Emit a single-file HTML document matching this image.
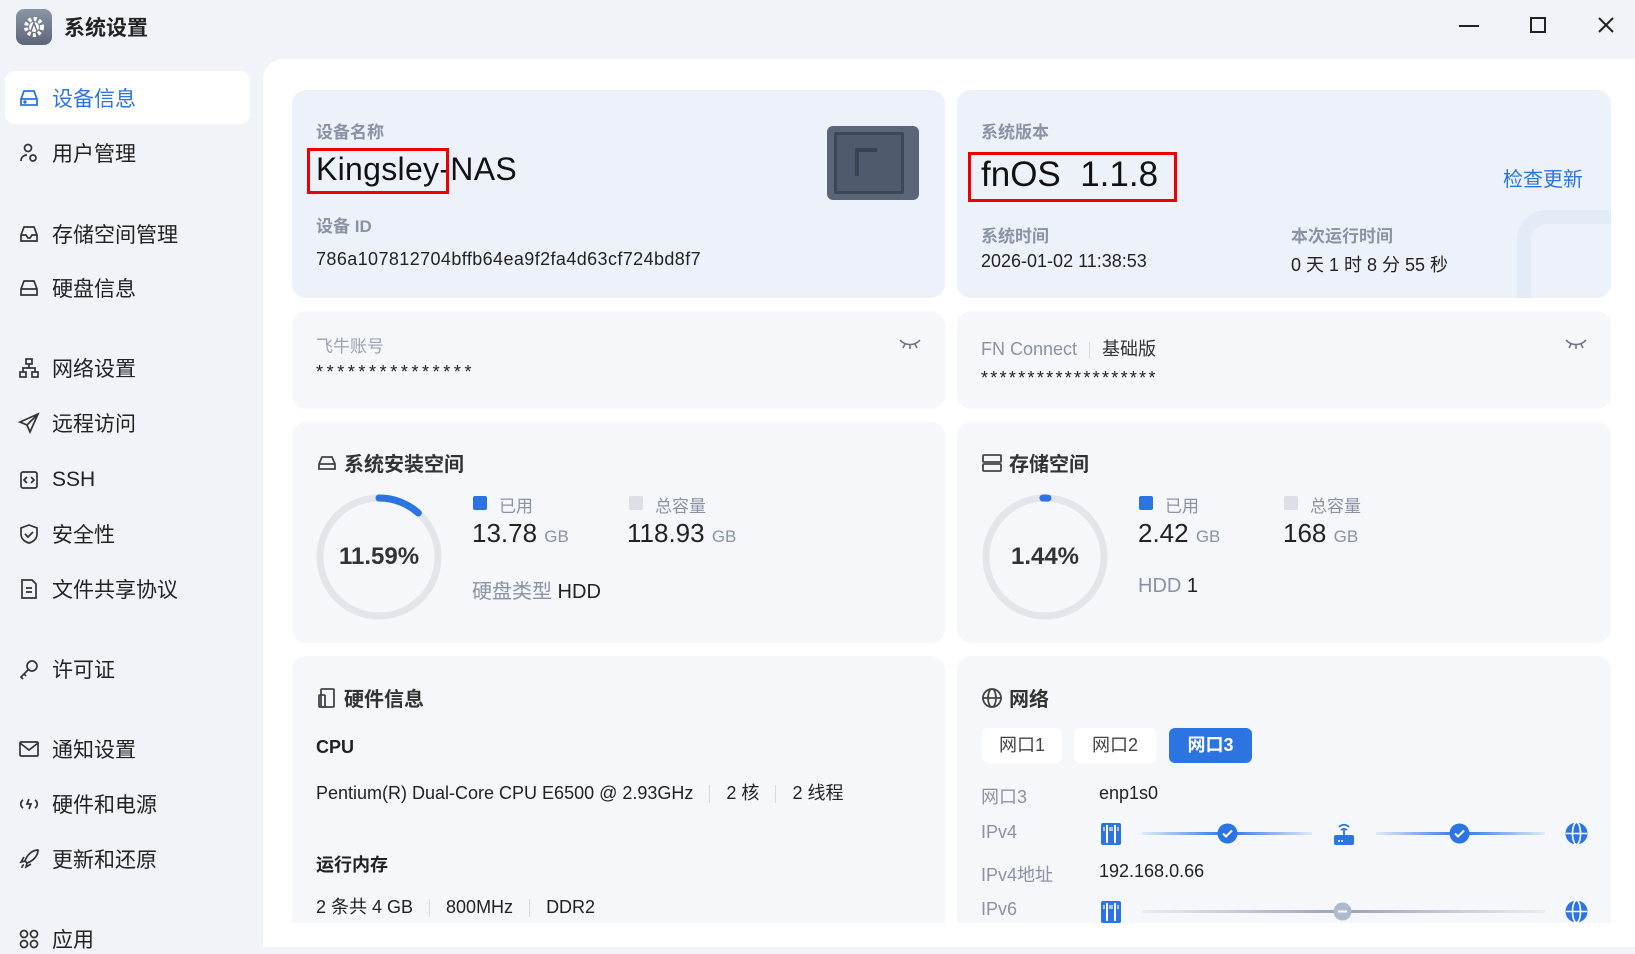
<!DOCTYPE html>
<html><head><meta charset="utf-8"><style>
*{margin:0;padding:0;box-sizing:border-box}
body{width:1635px;height:947px;background:#f0f3f8;font-family:"Liberation Sans","Noto Sans CJK SC",sans-serif;position:relative;overflow:hidden;color:#222}
.a{position:absolute;white-space:nowrap}
.nav{position:absolute;left:18px;font-size:21px;color:#222;display:flex;align-items:center;gap:12px;height:30px}
.nav svg{width:22px;height:22px}
.card{position:absolute;background:#f5f7fb;border-radius:14px}
.lbl{color:#8a93a6;font-weight:bold;font-size:17px}
.g{color:#8a93a6}
.t{font-size:20px;font-weight:bold;color:#333;display:flex;align-items:center;gap:6px}
.sep{display:inline-block;width:1px;height:18px;background:#d5d9e2;margin:0 16px;vertical-align:middle}
</style></head><body>
<!-- title bar -->
<div class="a" style="left:16px;top:9px;width:36px;height:36px;border-radius:8px;background:linear-gradient(#8a95a8,#5d6678)"></div>
<svg class="a" style="left:20px;top:13px" width="28" height="28" viewBox="0 0 28 28"><circle cx="14" cy="14" r="8" fill="none" stroke="#fff" stroke-width="4" stroke-dasharray="3 2.3"/><circle cx="14" cy="14" r="5" fill="#fff"/><path d="M11 18l3-8 3 8" stroke="#6b7486" stroke-width="1.5" fill="none"/></svg>
<div class="a" style="left:64px;top:12px;font-size:21px;font-weight:bold">系统设置</div>
<div class="a" style="left:1459px;top:25px;width:20px;height:2px;background:#222"></div>
<div class="a" style="left:1530px;top:17px;width:16px;height:16px;border:2px solid #222"></div>
<svg class="a" style="left:1597px;top:16px" width="18" height="18"><path d="M2 2L16 16M16 2L2 16" stroke="#222" stroke-width="2"/></svg>

<!-- sidebar -->
<div class="a" style="left:5px;top:71px;width:245px;height:53px;background:#fff;border-radius:10px"></div>
<div class="nav" style="top:83px;color:#2b74e2"><svg viewBox="0 0 22 22" fill="none" stroke="#2b74e2" stroke-width="1.8"><path d="M3 12l3-8h10l3 8v6H3z M3 12h16"/><circle cx="7" cy="15" r=".8"/></svg>设备信息</div>
<div class="nav" style="top:138px"><svg viewBox="0 0 22 22" fill="none" stroke="#333" stroke-width="1.7"><circle cx="10" cy="6" r="3.5"/><path d="M3 19c0-4 3-6 6-6"/><circle cx="15" cy="16" r="3"/></svg>用户管理</div>
<div class="nav" style="top:219px"><svg viewBox="0 0 22 22" fill="none" stroke="#333" stroke-width="1.7"><path d="M3 12l3-8h10l3 8v6H3z M3 12h5l2 3h2l2-3h5"/></svg>存储空间管理</div>
<div class="nav" style="top:273px"><svg viewBox="0 0 22 22" fill="none" stroke="#333" stroke-width="1.7"><path d="M3 12l3-8h10l3 8v6H3z M3 12h16"/></svg>硬盘信息</div>
<div class="nav" style="top:353px"><svg viewBox="0 0 22 22" fill="none" stroke="#333" stroke-width="1.7"><rect x="8" y="2" width="6" height="5"/><rect x="2" y="15" width="6" height="5"/><rect x="14" y="15" width="6" height="5"/><path d="M11 7v4M5 15v-4h12v4"/></svg>网络设置</div>
<div class="nav" style="top:408px"><svg viewBox="0 0 22 22" fill="none" stroke="#333" stroke-width="1.7"><path d="M20 2L2 10l7 3 3 7z M9 13l11-11"/></svg>远程访问</div>
<div class="nav" style="top:465px"><svg viewBox="0 0 22 22" fill="none" stroke="#333" stroke-width="1.7"><rect x="3" y="3" width="16" height="16" rx="2"/><path d="M9 8l-3 3 3 3M13 8l3 3-3 3"/></svg>SSH</div>
<div class="nav" style="top:519px"><svg viewBox="0 0 22 22" fill="none" stroke="#333" stroke-width="1.7"><path d="M11 2l8 3v6c0 5-4 8-8 9-4-1-8-4-8-9V5z M7 11l3 3 5-5"/></svg>安全性</div>
<div class="nav" style="top:574px"><svg viewBox="0 0 22 22" fill="none" stroke="#333" stroke-width="1.7"><path d="M4 2h10l4 4v14H4z M8 10h6M8 14h6"/></svg>文件共享协议</div>
<div class="nav" style="top:654px"><svg viewBox="0 0 22 22" fill="none" stroke="#333" stroke-width="1.7"><circle cx="14" cy="8" r="5"/><path d="M10 12l-7 7 2 2M6 16l2 2"/></svg>许可证</div>
<div class="nav" style="top:734px"><svg viewBox="0 0 22 22" fill="none" stroke="#333" stroke-width="1.7"><rect x="2" y="4" width="18" height="14" rx="1"/><path d="M2 5l9 7 9-7"/></svg>通知设置</div>
<div class="nav" style="top:789px"><svg viewBox="0 0 22 22" fill="none" stroke="#333" stroke-width="1.7"><path d="M5 7c-3 2-3 6 0 8M17 7c3 2 3 6 0 8M11 6l-2 5h4l-2 5"/></svg>硬件和电源</div>
<div class="nav" style="top:844px"><svg viewBox="0 0 22 22" fill="none" stroke="#333" stroke-width="1.7"><path d="M20 2c-6 0-11 5-13 11l2 2c6-2 11-7 11-13z M7 13l-4 1 3-5 M9 15l-1 4 5-3 M4 20c0-2 1-3 2-3"/></svg>更新和还原</div>
<div class="nav" style="top:924px"><svg viewBox="0 0 22 22" fill="none" stroke="#333" stroke-width="1.7"><circle cx="6" cy="6" r="3.5"/><circle cx="16" cy="6" r="3.5"/><circle cx="6" cy="16" r="3.5"/><circle cx="16" cy="16" r="3.5"/></svg>应用</div>

<!-- main -->
<div class="a" style="left:263px;top:59px;width:1372px;height:888px;background:#fff;border-radius:20px 0 0 0"></div>
<div class="a" style="left:263px;top:946px;width:1372px;height:1px;background:#eceff4"></div>

<!-- row1 -->
<div class="card" style="left:292px;top:90px;width:653px;height:208px;background:#edf2fa"></div>
<div class="a lbl" style="left:316px;top:118px">设备名称</div>
<div class="a" style="left:316px;top:151px;font-size:32px;color:#111;letter-spacing:0.3px">Kingsley-NAS</div>
<div class="a" style="left:307px;top:148px;width:142px;height:46px;border:3px solid #ee0000"></div>
<div class="a lbl" style="left:316px;top:212px">设备 ID</div>
<div class="a" style="left:316px;top:249px;font-size:18px;color:#222;letter-spacing:0.4px">786a107812704bffb64ea9f2fa4d63cf724bd8f7</div>
<div class="a" style="left:827px;top:126px;width:92px;height:74px;background:#5a6577;border-radius:6px"></div>
<div class="a" style="left:834px;top:132px;width:70px;height:62px;border:3px solid #3e4756;background:#4f5a6c;border-radius:2px"></div>
<div class="a" style="left:855px;top:148px;width:22px;height:28px;border-left:4px solid #3a4352;border-top:4px solid #3a4352"></div>

<div class="card" style="left:957px;top:90px;width:654px;height:208px;background:#edf2fa;overflow:hidden"><div style="position:absolute;left:560px;top:120px;width:140px;height:140px;border:14px solid #e3ebf6;border-radius:30px"></div></div>
<div class="a lbl" style="left:981px;top:118px">系统版本</div>
<div class="a" style="left:981px;top:155px;font-size:35px;color:#111">fnOS&nbsp;&nbsp;1.1.8</div>
<div class="a" style="left:968px;top:152px;width:209px;height:50px;border:3px solid #ee0000"></div>
<div class="a" style="left:1503px;top:163px;font-size:20px;color:#2b74e2">检查更新</div>
<div class="a lbl" style="left:981px;top:222px">系统时间</div>
<div class="a" style="left:981px;top:251px;font-size:18px">2026-01-02 11:38:53</div>
<div class="a lbl" style="left:1291px;top:222px">本次运行时间</div>
<div class="a" style="left:1291px;top:251px;font-size:18px">0 天 1 时 8 分 55 秒</div>

<!-- row2 -->
<div class="card" style="left:292px;top:311px;width:653px;height:98px"></div>
<div class="a g" style="left:316px;top:332px;font-size:17px;color:#9aa3b4">飞牛账号</div>
<div class="a" style="left:316px;top:362px;font-size:18px;letter-spacing:3.6px">***************</div>
<svg class="a" style="left:898px;top:337px" width="24" height="14" viewBox="0 0 24 14" fill="none" stroke="#6b7486" stroke-width="1.6"><path d="M2 3c5 6 15 6 20 0M7 7l-2 4M12 8v4M17 7l2 4"/></svg>
<div class="card" style="left:957px;top:311px;width:654px;height:98px"></div>
<div class="a g" style="left:981px;top:335px;font-size:18px">FN Connect<span class="sep" style="margin:0 12px;height:16px"></span><span style="color:#333">基础版</span></div>
<div class="a" style="left:981px;top:368px;font-size:18px;letter-spacing:2.3px">*******************</div>
<svg class="a" style="left:1564px;top:337px" width="24" height="14" viewBox="0 0 24 14" fill="none" stroke="#6b7486" stroke-width="1.6"><path d="M2 3c5 6 15 6 20 0M7 7l-2 4M12 8v4M17 7l2 4"/></svg>

<!-- row3 -->
<div class="card" style="left:292px;top:422px;width:653px;height:221px"></div>
<div class="a t" style="left:316px;top:448px"><svg width="22" height="22" viewBox="0 0 22 22" fill="none" stroke="#444" stroke-width="1.8"><path d="M3 12l3-7h10l3 7v5H3z M3 12h16"/></svg>系统安装空间</div>
<svg class="a" style="left:316px;top:494px" width="126" height="126"><circle cx="63" cy="63" r="59" fill="none" stroke="#e3e5ea" stroke-width="7"/><circle cx="63" cy="63" r="59" fill="none" stroke="#2b74e2" stroke-width="7" stroke-dasharray="43 400" transform="rotate(-90 63 63)" stroke-linecap="round"/></svg>
<div class="a" style="left:316px;top:543px;width:126px;text-align:center;font-size:24px;font-weight:bold;color:#333">11.59%</div>
<div class="a" style="left:473px;top:496px;width:14px;height:14px;background:#2b74e2;border-radius:2px"></div>
<div class="a g" style="left:499px;top:492px;font-size:17px">已用</div>
<div class="a" style="left:472px;top:518px;font-size:26px;color:#222">13.78 <span class="g" style="font-size:17px">GB</span></div>
<div class="a" style="left:629px;top:496px;width:14px;height:14px;background:#dcdfe5;border-radius:2px"></div>
<div class="a g" style="left:655px;top:492px;font-size:17px">总容量</div>
<div class="a" style="left:627px;top:518px;font-size:26px;color:#222">118.93 <span class="g" style="font-size:17px">GB</span></div>
<div class="a" style="left:472px;top:575px;font-size:20px"><span class="g">硬盘类型</span> HDD</div>

<div class="card" style="left:957px;top:422px;width:654px;height:221px"></div>
<div class="a t" style="left:981px;top:448px"><svg width="22" height="22" viewBox="0 0 22 22" fill="none" stroke="#444" stroke-width="1.8"><rect x="2" y="3" width="18" height="7" rx="1"/><rect x="2" y="12" width="18" height="7" rx="1"/></svg>存储空间</div>
<svg class="a" style="left:982px;top:494px" width="126" height="126"><circle cx="63" cy="63" r="59" fill="none" stroke="#e3e5ea" stroke-width="7"/><circle cx="63" cy="63" r="59" fill="none" stroke="#2b74e2" stroke-width="7" stroke-dasharray="5 400" transform="rotate(-92 63 63)" stroke-linecap="round"/></svg>
<div class="a" style="left:982px;top:543px;width:126px;text-align:center;font-size:24px;font-weight:bold;color:#333">1.44%</div>
<div class="a" style="left:1139px;top:496px;width:14px;height:14px;background:#2b74e2;border-radius:2px"></div>
<div class="a g" style="left:1165px;top:492px;font-size:17px">已用</div>
<div class="a" style="left:1138px;top:518px;font-size:26px;color:#222">2.42 <span class="g" style="font-size:17px">GB</span></div>
<div class="a" style="left:1284px;top:496px;width:14px;height:14px;background:#dcdfe5;border-radius:2px"></div>
<div class="a g" style="left:1310px;top:492px;font-size:17px">总容量</div>
<div class="a" style="left:1283px;top:518px;font-size:26px;color:#222">168 <span class="g" style="font-size:17px">GB</span></div>
<div class="a" style="left:1138px;top:575px;font-size:20px"><span class="g">HDD</span> 1</div>

<!-- row4 -->
<div class="card" style="left:292px;top:656px;width:653px;height:267px;border-radius:14px 14px 0 0"></div>
<div class="a t" style="left:316px;top:683px"><svg width="22" height="22" viewBox="0 0 22 22" fill="none" stroke="#444" stroke-width="1.8"><rect x="5" y="2" width="13" height="18" rx="1"/><rect x="3" y="8" width="6" height="12" rx="1"/></svg>硬件信息</div>
<div class="a" style="left:316px;top:737px;font-size:18px;font-weight:bold">CPU</div>
<div class="a" style="left:316px;top:779px;font-size:18px">Pentium(R) Dual-Core CPU E6500 @ 2.93GHz<span class="sep"></span>2 核<span class="sep"></span>2 线程</div>
<div class="a" style="left:316px;top:851px;font-size:18px;font-weight:bold">运行内存</div>
<div class="a" style="left:316px;top:893px;font-size:18px">2 条共 4 GB<span class="sep"></span>800MHz<span class="sep"></span>DDR2</div>

<div class="card" style="left:957px;top:656px;width:654px;height:267px;border-radius:14px 14px 0 0"></div>
<div class="a t" style="left:981px;top:683px"><svg width="22" height="22" viewBox="0 0 22 22" fill="none" stroke="#444" stroke-width="1.8"><circle cx="11" cy="11" r="9"/><ellipse cx="11" cy="11" rx="4" ry="9"/><path d="M2 11h18"/></svg>网络</div>
<div class="a" style="left:982px;top:728px;width:80px;height:35px;background:#fff;border-radius:6px;font-size:18px;color:#444;text-align:center;line-height:35px">网口1</div>
<div class="a" style="left:1074px;top:728px;width:82px;height:35px;background:#fff;border-radius:6px;font-size:18px;color:#444;text-align:center;line-height:35px">网口2</div>
<div class="a" style="left:1169px;top:728px;width:83px;height:35px;background:#2b74e2;border-radius:6px;font-size:18px;color:#fff;font-weight:bold;text-align:center;line-height:35px">网口3</div>
<div class="a g" style="left:981px;top:783px;font-size:18px">网口3</div><div class="a" style="left:1099px;top:783px;font-size:18px">enp1s0</div>
<div class="a g" style="left:981px;top:822px;font-size:18px">IPv4</div>
<div class="a g" style="left:981px;top:861px;font-size:18px">IPv4地址</div><div class="a" style="left:1099px;top:861px;font-size:18px">192.168.0.66</div>
<div class="a g" style="left:981px;top:899px;font-size:18px">IPv6</div>
<div class="a" style="left:1142px;top:832px;width:170px;height:3px;background:linear-gradient(90deg,rgba(43,116,226,.1),#2b74e2 50%,rgba(43,116,226,.1))"></div>
<div class="a" style="left:1376px;top:832px;width:169px;height:3px;background:linear-gradient(90deg,rgba(43,116,226,.1),#2b74e2 50%,rgba(43,116,226,.1))"></div>
<svg class="a" style="left:1217px;top:823px" width="21" height="21"><circle cx="10.5" cy="10.5" r="10" fill="#2b74e2"/><path d="M6 10.5l3 3 6-6" stroke="#fff" stroke-width="2" fill="none"/></svg>
<svg class="a" style="left:1449px;top:823px" width="21" height="21"><circle cx="10.5" cy="10.5" r="10" fill="#2b74e2"/><path d="M6 10.5l3 3 6-6" stroke="#fff" stroke-width="2" fill="none"/></svg>
<svg class="a" style="left:1100px;top:822px" width="22" height="24"><rect x="1" y="1" width="20" height="22" rx="2" fill="#2b74e2"/><path d="M7 3v18M15 3v18" stroke="#fff" stroke-width="2"/><path d="M4 5v4M10 5v4M12 5v4M18 5v4" stroke="#fff" stroke-width="1.2"/></svg>
<svg class="a" style="left:1333px;top:822px" width="22" height="24"><rect x="1" y="13" width="20" height="10" rx="2" fill="#2b74e2"/><path d="M11 13V7M6 5c3-3 7-3 10 0M8 8c2-1.5 4-1.5 6 0" stroke="#2b74e2" stroke-width="1.8" fill="none"/><circle cx="6" cy="19" r="1" fill="#fff"/><circle cx="9" cy="19" r="1" fill="#fff"/></svg>
<svg class="a" style="left:1565px;top:822px" width="23" height="23"><circle cx="11.5" cy="11.5" r="11" fill="#2b74e2"/><ellipse cx="11.5" cy="11.5" rx="4" ry="11" fill="none" stroke="#fff" stroke-width="1.6"/><path d="M1 11.5h21" stroke="#fff" stroke-width="1.6"/></svg>
<div class="a" style="left:1142px;top:910px;width:403px;height:3px;background:linear-gradient(90deg,rgba(140,150,170,.1),#98a3b8 50%,rgba(140,150,170,.1))"></div>
<svg class="a" style="left:1333px;top:902px" width="19" height="19"><circle cx="9.5" cy="9.5" r="9" fill="#aebbcc"/><path d="M5 9.5h9" stroke="#fff" stroke-width="2"/></svg>
<svg class="a" style="left:1100px;top:900px" width="22" height="24"><rect x="1" y="1" width="20" height="22" rx="2" fill="#2b74e2"/><path d="M7 3v18M15 3v18" stroke="#fff" stroke-width="2"/><path d="M4 5v4M10 5v4M12 5v4M18 5v4" stroke="#fff" stroke-width="1.2"/></svg>
<svg class="a" style="left:1565px;top:900px" width="23" height="23"><circle cx="11.5" cy="11.5" r="11" fill="#2b74e2"/><ellipse cx="11.5" cy="11.5" rx="4" ry="11" fill="none" stroke="#fff" stroke-width="1.6"/><path d="M1 11.5h21" stroke="#fff" stroke-width="1.6"/></svg>
<div class="a" style="left:263px;top:923px;width:1372px;height:24px;background:#fff"></div>
</body></html>
